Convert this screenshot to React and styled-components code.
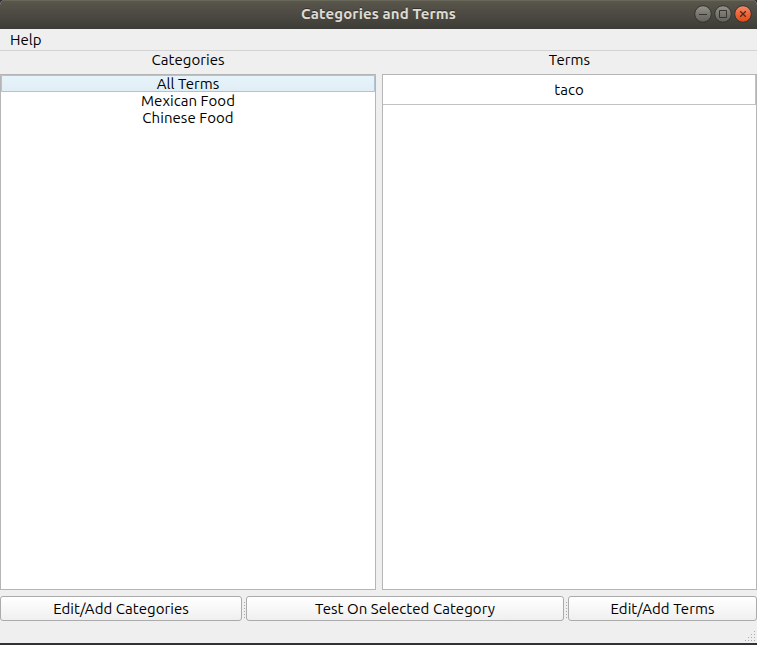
import React from "react";
import styled, { createGlobalStyle } from "styled-components";

const GlobalStyle = createGlobalStyle`
  * { box-sizing: border-box; }
  html, body { margin: 0; padding: 0; overflow: hidden; background: #2f3136; }
  body { font-family: Ubuntu, "Noto Sans", sans-serif; font-size: 15px; color: #000; }
`;

const Window = styled.div`
  width: 757px;
  height: 645px;
  display: flex;
  flex-direction: column;
  background: #efefef;
  border-bottom: 2px solid #303236;
  border-radius: 5px 5px 0 0;
  overflow: hidden;
`;

const TitleBar = styled.header`
  height: 29px;
  flex: none;
  display: grid;
  grid-template-columns: 64px 1fr 64px;
  align-items: start;
  background: linear-gradient(#5b584c 0, #57544a 3px, #3d3c37 100%);
  box-shadow: inset 0 1px #69665a;
`;

const Title = styled.h1`
  grid-column: 2;
  margin: 0;
  font-size: 15px;
  line-height: 28px;
  font-weight: 700;
  text-align: center;
  color: #dfdbd2;
  text-shadow: 0 -1px #33322e;
`;

const Controls = styled.div`
  display: flex;
  gap: 2px;
  padding: 5px 0 0 1px;
`;

const ControlIcon = styled.svg`
  width: 18px;
  height: 18px;
  display: block;
`;

const MenuBar = styled.nav`
  height: 22px;
  flex: none;
  padding-left: 10px;
  line-height: 22px;
  border-bottom: 1px solid #d2d2d2;
`;

const Columns = styled.main`
  height: 539px;
  flex: none;
  display: grid;
  grid-template-columns: 376px 375px;
  column-gap: 6px;
`;

const Column = styled.section`
  display: flex;
  flex-direction: column;
  text-align: center;
`;

const Heading = styled.div`
  height: 23px;
  line-height: 18px;
`;

const List = styled.div`
  flex: 1;
  border: 1px solid #b5b5b5;
  background: #fff;
`;

const Category = styled.div`
  height: 17px;
  line-height: 18px;
  border-radius: 1px;
  background: ${(p) => (p.$selected ? "linear-gradient(#e8f4fc, #e0edf5)" : "none")};
  box-shadow: ${(p) => (p.$selected ? "inset 0 0 0 1px #adc4d4" : "none")};
`;

const Term = styled.div`
  height: 30px;
  line-height: 30px;
  border-right: 1px solid #c2c2c2;
  border-bottom: 1px solid #c2c2c2;
`;

const Label = styled.span`
  white-space: nowrap;
  letter-spacing: ${(p) => p.$spacing ?? 0.05}px;
`;

const Actions = styled.div`
  margin-top: 6px;
  height: 25px;
  flex: none;
  display: grid;
  grid-template-columns: 242px 4px 318px 4px 189px;
`;

const Button = styled.button`
  height: 25px;
  padding: 0;
  border: 1px solid #ababab;
  border-radius: 3px;
  background: linear-gradient(#fff, #fbfbfb 30%, #efefef);
  font: inherit;
  line-height: 22px;
  color: #000;
`;

const Handle = styled.svg`
  width: 4px;
  height: 25px;
  display: block;
`;

const StatusBar = styled.footer`
  flex: 1;
  display: flex;
  justify-content: flex-end;
  align-items: flex-end;
`;

const Grip = styled.svg`
  width: 13px;
  height: 13px;
  display: block;
`;

const categories = ["All Terms", "Mexican Food", "Chinese Food"];

function WindowControl({ kind }) {
  const close = kind === "close";
  const id = `control-${kind}`;
  return (
    <ControlIcon viewBox="0 0 18 18" role="img" aria-label={kind}>
      <defs>
        <linearGradient id={id} x1="0" y1="0" x2="0" y2="1">
          <stop offset="0" stopColor={close ? "#f58a68" : "#95938c"} />
          <stop offset="0.55" stopColor={close ? "#ec6235" : "#75746d"} />
          <stop offset="1" stopColor={close ? "#de4a16" : "#62615b"} />
        </linearGradient>
      </defs>
      <circle cx="9" cy="9" r="8.3" fill={`url(#${id})`} stroke="#34332f" />
      {kind === "minimize" && <path d="M5 9.5H13" stroke="#35342f" />}
      {kind === "maximize" && <path d="M5.5 5.5h7v7h-7z" fill="none" stroke="#35342f" />}
      {close && <path d="M6.2 6.2l5.6 5.6M11.8 6.2l-5.6 5.6" stroke="#4a2a18" strokeWidth="1.3" />}
    </ControlIcon>
  );
}

function SplitHandle() {
  return (
    <Handle viewBox="0 0 4 25" aria-hidden="true">
      {[6, 9, 12, 15, 18, 21].map((y) => (
        <rect key={y} x="2" y={y} width="1" height="1" fill="#aaa" />
      ))}
    </Handle>
  );
}

function SizeGrip() {
  const dots = [];
  for (let row = 0; row < 4; row++) {
    for (let col = 3 - row; col < 4; col++) dots.push([1 + col * 3, 1 + row * 3]);
  }
  return (
    <Grip viewBox="0 0 13 13" aria-hidden="true">
      {dots.map(([x, y]) => (
        <rect key={`${x}-${y}`} x={x} y={y} width="1" height="1" fill="#aaa" />
      ))}
    </Grip>
  );
}

export default function App() {
  return (
    <>
      <GlobalStyle />
      <Window>
        <TitleBar>
          <Title><Label $spacing={0.13}>Categories and Terms</Label></Title>
          <Controls>
            <WindowControl kind="minimize" />
            <WindowControl kind="maximize" />
            <WindowControl kind="close" />
          </Controls>
        </TitleBar>
        <MenuBar><Label>Help</Label></MenuBar>
        <Columns>
          <Column>
            <Heading><Label>Categories</Label></Heading>
            <List>
              {categories.map((name, i) => (
                <Category key={name} $selected={i === 0}>
                  <Label>{name}</Label>
                </Category>
              ))}
            </List>
          </Column>
          <Column>
            <Heading><Label>Terms</Label></Heading>
            <List>
              <Term><Label>taco</Label></Term>
            </List>
          </Column>
        </Columns>
        <Actions>
          <Button><Label>Edit/Add Categories</Label></Button>
          <SplitHandle />
          <Button><Label>Test On Selected Category</Label></Button>
          <SplitHandle />
          <Button><Label>Edit/Add Terms</Label></Button>
        </Actions>
        <StatusBar><SizeGrip /></StatusBar>
      </Window>
    </>
  );
}
